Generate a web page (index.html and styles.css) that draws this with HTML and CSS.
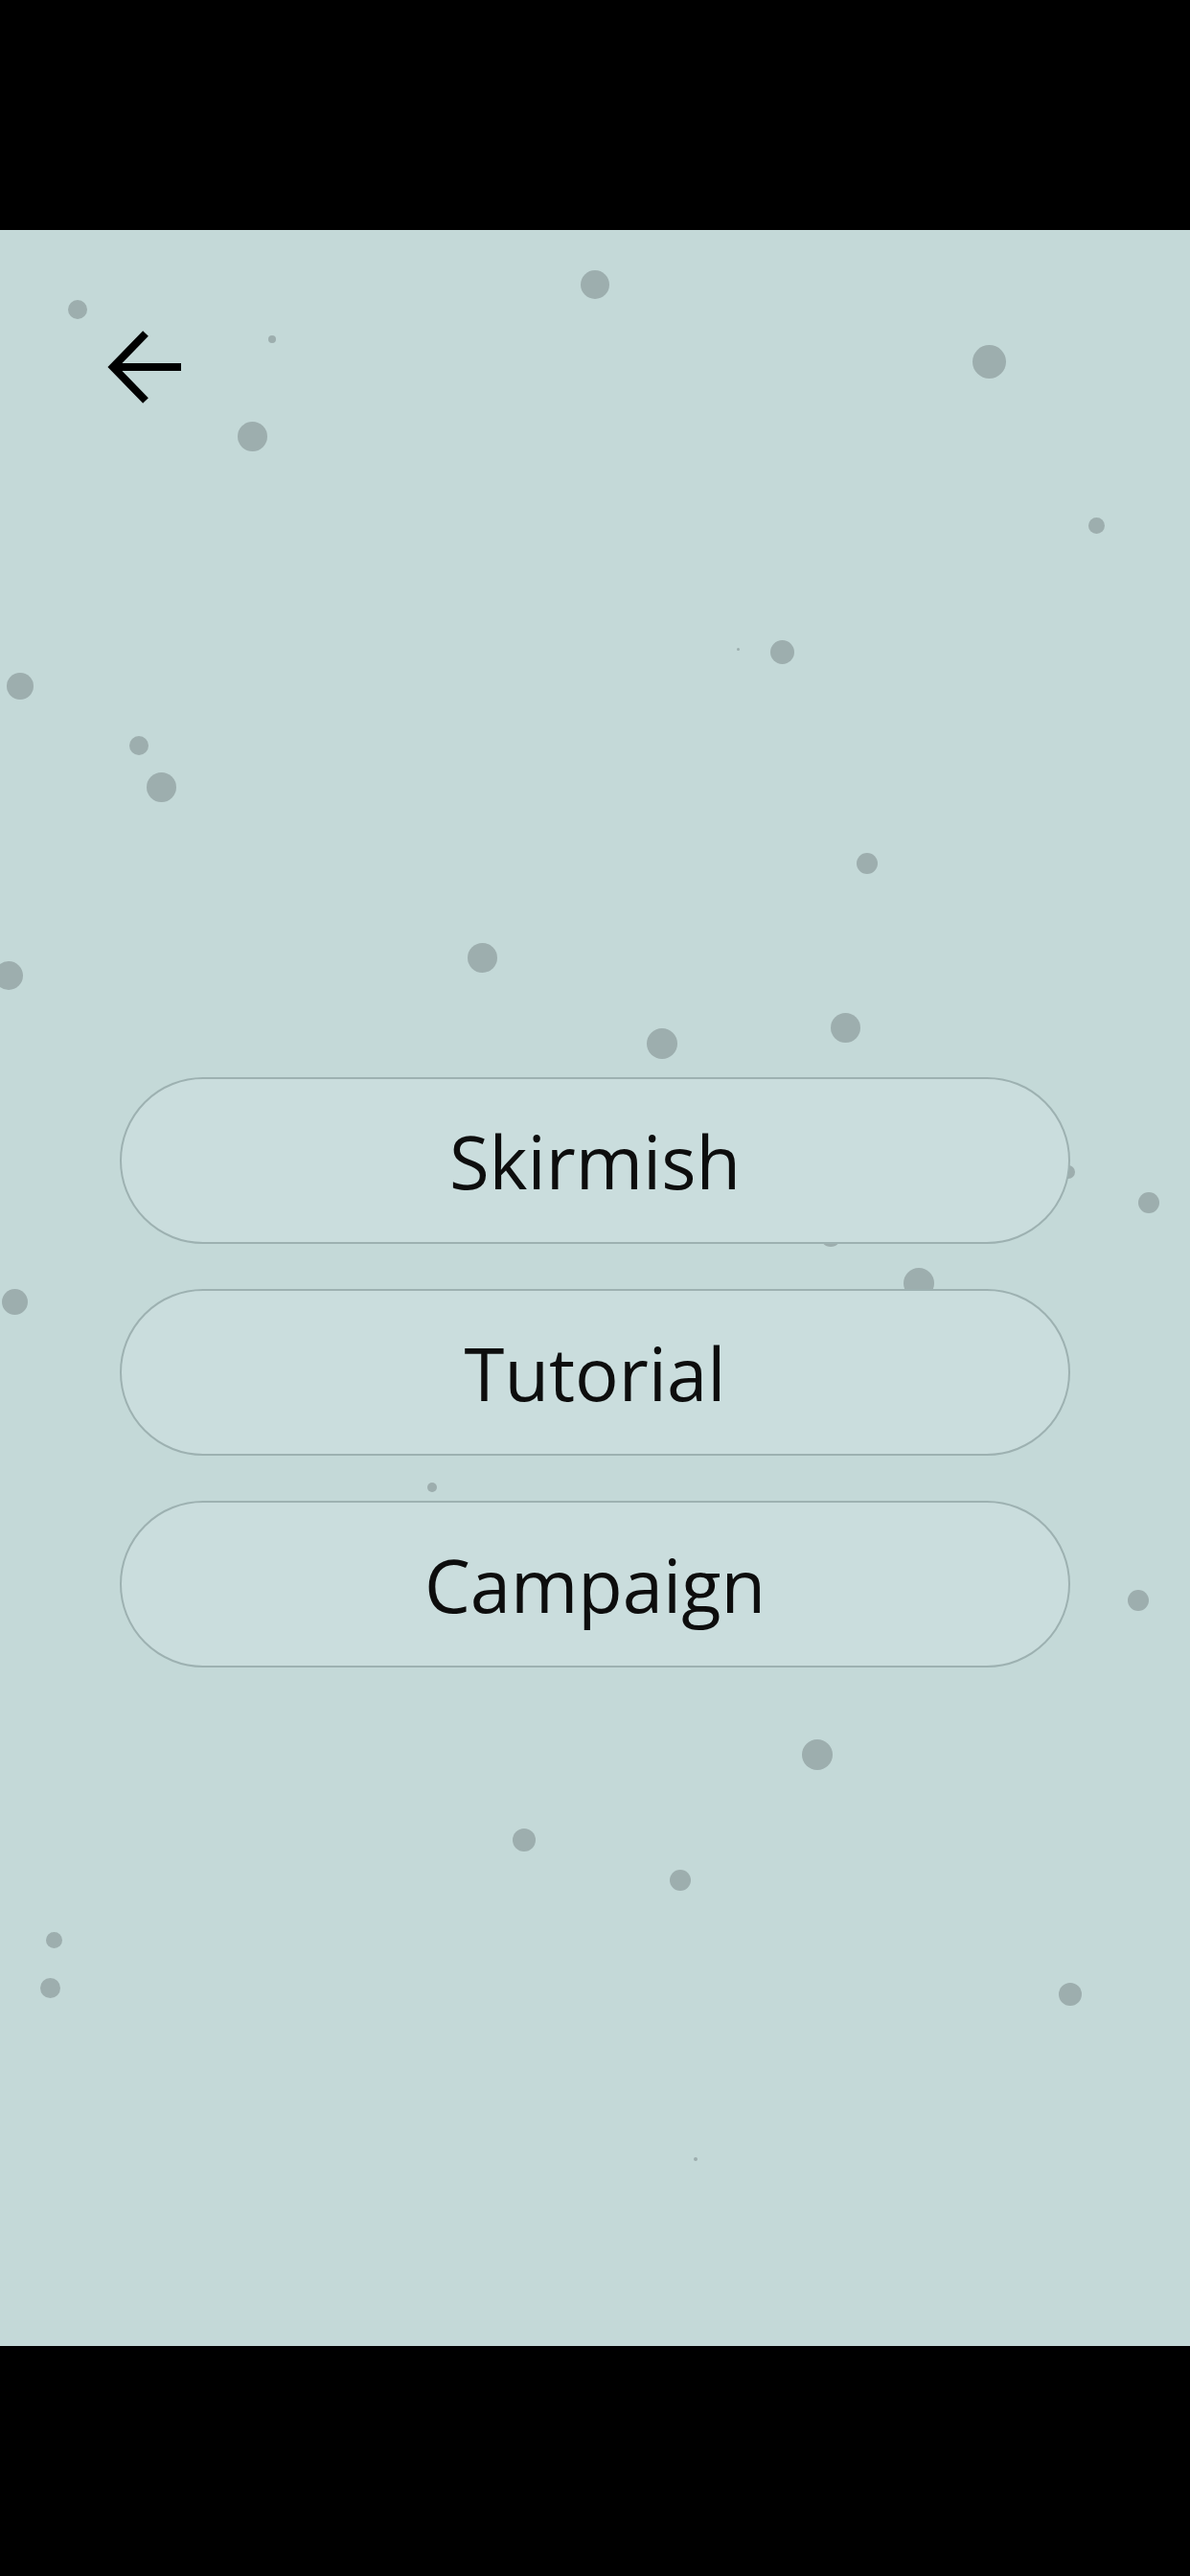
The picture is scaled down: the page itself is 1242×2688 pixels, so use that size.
FILE: index.html
```html
<!DOCTYPE html>
<html lang="en">
<head>
<meta charset="utf-8">
<title>Game Mode</title>
<link rel="stylesheet" href="styles.css">
</head>
<body>
<div class="device">
  <div class="bar"></div>
  <main class="screen">
    <div class="particles" aria-hidden="true">
      <span class="dot" style="--x:81px;--y:83px;--d:20px"></span>
      <span class="dot" style="--x:284px;--y:114px;--d:8px"></span>
      <span class="dot" style="--x:263px;--y:215px;--d:31px"></span>
      <span class="dot" style="--x:621px;--y:57px;--d:30px"></span>
      <span class="dot" style="--x:1032px;--y:137px;--d:35px"></span>
      <span class="dot" style="--x:1144px;--y:308px;--d:17px"></span>
      <span class="dot" style="--x:770px;--y:437px;--d:3px"></span>
      <span class="dot" style="--x:816px;--y:440px;--d:25px"></span>
      <span class="dot" style="--x:21px;--y:476px;--d:28px"></span>
      <span class="dot" style="--x:145px;--y:538px;--d:20px"></span>
      <span class="dot" style="--x:168px;--y:581px;--d:31px"></span>
      <span class="dot" style="--x:905px;--y:661px;--d:22px"></span>
      <span class="dot" style="--x:9px;--y:778px;--d:30px"></span>
      <span class="dot" style="--x:503px;--y:759px;--d:31px"></span>
      <span class="dot" style="--x:691px;--y:849px;--d:32px"></span>
      <span class="dot" style="--x:882px;--y:832px;--d:31px"></span>
      <span class="dot" style="--x:1199px;--y:1015px;--d:22px"></span>
      <span class="dot" style="--x:867px;--y:1050px;--d:22px"></span>
      <span class="dot" style="--x:959px;--y:1099px;--d:32px"></span>
      <span class="dot" style="--x:1115px;--y:983px;--d:14px"></span>
      <span class="dot" style="--x:15px;--y:1118px;--d:27px"></span>
      <span class="dot" style="--x:451px;--y:1312px;--d:10px"></span>
      <span class="dot" style="--x:1188px;--y:1430px;--d:22px"></span>
      <span class="dot" style="--x:853px;--y:1591px;--d:32px"></span>
      <span class="dot" style="--x:547px;--y:1680px;--d:24px"></span>
      <span class="dot" style="--x:710px;--y:1722px;--d:22px"></span>
      <span class="dot" style="--x:56px;--y:1784px;--d:17px"></span>
      <span class="dot" style="--x:52px;--y:1834px;--d:21px"></span>
      <span class="dot" style="--x:1117px;--y:1841px;--d:24px"></span>
      <span class="dot" style="--x:726px;--y:2013px;--d:4px"></span>
    </div>
    <header class="header">
      <button class="back" aria-label="Back">
        <svg class="back-icon" viewBox="0 0 88 80" width="88" height="80">
          <path d="M46 5 L12 40 L46 75 M12 40 H83" fill="none" stroke="#000" stroke-width="8" stroke-linecap="butt" stroke-linejoin="miter"/>
        </svg>
      </button>
    </header>
    <nav class="menu">
      <button class="mode">Skirmish</button>
      <button class="mode">Tutorial</button>
      <button class="mode">Campaign</button>
    </nav>
  </main>
  <div class="bar"></div>
</div>
</body>
</html>
```

FILE: styles.css
```css
* {
  box-sizing: border-box;
}

html, body {
  margin: 0;
  padding: 0;
  background: #000;
}

body {
  width: 1242px;
  height: 2688px;
  overflow: hidden;
  font-family: "Open Sans", "Noto Sans", sans-serif;
}

.device {
  display: flex;
  flex-direction: column;
  height: 2688px;
}

.bar {
  height: 240px;
  flex: 0 0 240px;
  background: #000;
}

.screen {
  position: relative;
  flex: 0 0 2208px;
  height: 2208px;
  background: #c4d9d8;
  display: flex;
  flex-direction: column;
  overflow: hidden;
}

.particles {
  position: absolute;
  inset: 0;
  z-index: 0;
}

.dot {
  position: absolute;
  left: calc(var(--x) - var(--d) / 2);
  top: calc(var(--y) - var(--d) / 2);
  width: var(--d);
  height: var(--d);
  border-radius: 50%;
  background: #9daeae;
}

.header {
  position: relative;
  z-index: 1;
  height: 183px;
  padding: 103px 0 0 106px;
}

.back {
  display: block;
  padding: 0;
  margin: 0;
  border: 0;
  background: transparent;
  width: 88px;
  height: 80px;
}

.back-icon {
  display: block;
}

.menu {
  position: relative;
  z-index: 1;
  display: flex;
  flex-direction: column;
  align-items: center;
  gap: 47px;
  padding-top: 701px;
}

.mode {
  width: 992px;
  height: 174px;
  border: 2px solid #9db1b1;
  border-radius: 87px;
  background: #cadddd;
  color: #0d0d0d;
  font-family: "Open Sans", "Noto Sans", sans-serif;
  font-size: 76px;
  font-weight: 400;
  display: flex;
  align-items: center;
  justify-content: center;
  padding: 0;
}
```
